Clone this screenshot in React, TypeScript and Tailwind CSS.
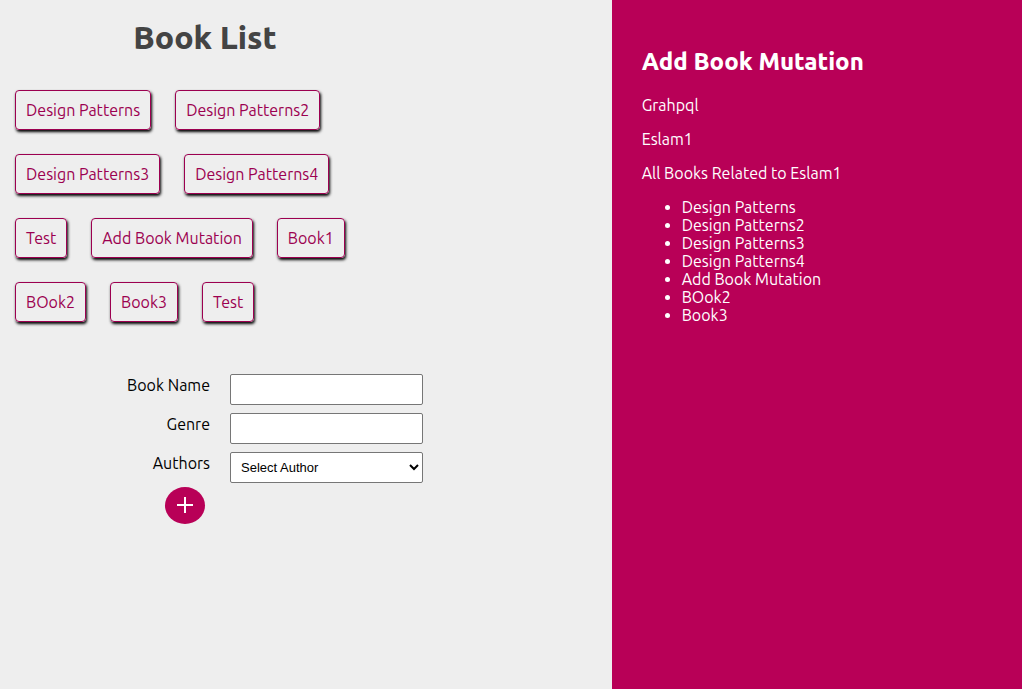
import { useState } from 'react';

const books = [
  'Design Patterns',
  'Design Patterns2',
  'Design Patterns3',
  'Design Patterns4',
  'Test',
  'Add Book Mutation',
  'Book1',
  'BOok2',
  'Book3',
  'Test',
];

const selectedBook = {
  name: 'Add Book Mutation',
  genre: 'Grahpql',
  author: 'Eslam1',
  related: [
    'Design Patterns',
    'Design Patterns2',
    'Design Patterns3',
    'Design Patterns4',
    'Add Book Mutation',
    'BOok2',
    'Book3',
  ],
};

const fieldClass =
  'h-[31px] w-full rounded-xs border border-[#767676] bg-white px-1.5 font-["Liberation_Sans",Arial,sans-serif] text-[13px] text-black';
const rowClass = 'grid grid-cols-[210px_193px] gap-5';
const labelClass = 'pt-0.5 text-right leading-[18px]';

function BookList() {
  return (
    <ul className="mt-[34px] flex max-w-[400px] flex-wrap gap-6 pl-[15px]">
      {books.map((book, i) => (
        <li key={i} className="flex">
          <button
            type="button"
            className="h-10 cursor-pointer rounded-sm border border-[#9c0050] px-2.5 leading-[18px] text-[#9c0050] shadow-[1px_2px_3px_black]"
          >
            {book}
          </button>
        </li>
      ))}
    </ul>
  );
}

function AddBookForm() {
  const [name, setName] = useState('');
  const [genre, setGenre] = useState('');
  return (
    <form className="mt-[52px] flex flex-col gap-2 text-black" onSubmit={(e) => e.preventDefault()}>
      <div className={rowClass}>
        <label htmlFor="name" className={labelClass}>Book Name</label>
        <input id="name" type="text" value={name} onChange={(e) => setName(e.target.value)} className={fieldClass} />
      </div>
      <div className={rowClass}>
        <label htmlFor="genre" className={labelClass}>Genre</label>
        <input id="genre" type="text" value={genre} onChange={(e) => setGenre(e.target.value)} className={fieldClass} />
      </div>
      <div className={rowClass}>
        <label htmlFor="author" className={labelClass}>Authors</label>
        <select id="author" className={fieldClass}>
          <option>Select Author</option>
          <option>Eslam1</option>
        </select>
      </div>
      <button
        type="submit"
        aria-label="Add book"
        className="-mt-1 ml-[165px] flex h-[37px] w-10 cursor-pointer items-center justify-center rounded-[50%] bg-[#b80057] pb-px text-white"
      >
        <svg viewBox="0 0 16 16" className="size-4" aria-hidden="true">
          <path d="M0 8h16M8 0v16" stroke="currentColor" strokeWidth="2" />
        </svg>
      </button>
    </form>
  );
}

export default function App() {
  return (
    <div className="flex min-h-screen bg-[#eeeeee] font-[Ubuntu,'Open_Sans',sans-serif] text-base">
      <main className="min-w-0 flex-1">
        <h1 className="max-w-[410px] pt-[18px] text-center text-[32px] leading-[38px] font-extrabold text-[#444444]">Book List</h1>
        <BookList />
        <AddBookForm />
      </main>
      <aside className="w-[40.15%] bg-[#b80057] px-[30px] pt-12 text-white">
        <h2 className="text-2xl leading-7 font-extrabold">{selectedBook.name}</h2>
        <div className="mt-5 flex flex-col gap-4 leading-[18px]">
          <p>{selectedBook.genre}</p>
          <p>{selectedBook.author}</p>
          <p>All Books Related to {selectedBook.author}</p>
          <ul className="list-disc pl-10">
            {selectedBook.related.map((book) => (
              <li key={book}>{book}</li>
            ))}
          </ul>
        </div>
      </aside>
    </div>
  );
}
